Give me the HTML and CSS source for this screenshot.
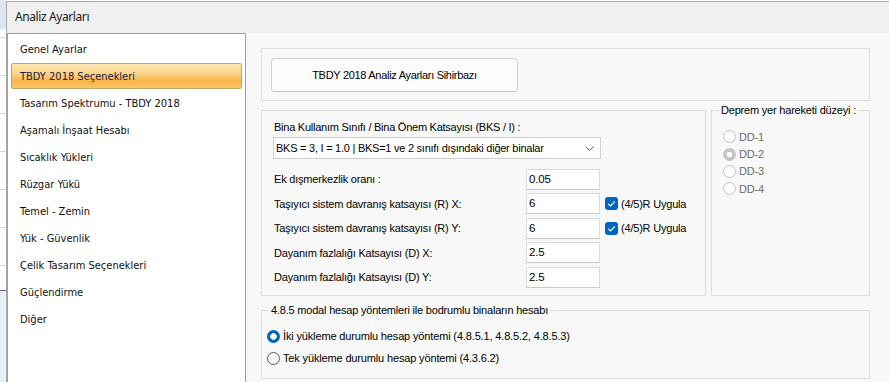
FILE: index.html
```html
<!DOCTYPE html>
<html lang="tr">
<head>
  <meta charset="UTF-8" />
  <meta name="viewport" content="width=device-width, initial-scale=1.0"/>
  <title>Analiz Ayarları</title>
  <link rel="stylesheet" href="styles.css">
</head>
<body>
  <div class="screen">
    <div class="backapp"></div>

    <div class="dialog">
      <div class="titlebar">Analiz Ayarları</div>

      <div class="dialog-body">
        <ul class="nav">
          <li>Genel Ayarlar</li>
          <li class="selected">TBDY 2018 Seçenekleri</li>
          <li>Tasarım Spektrumu - TBDY 2018</li>
          <li>Aşamalı İnşaat Hesabı</li>
          <li>Sıcaklık Yükleri</li>
          <li>Rüzgar Yükü</li>
          <li>Temel - Zemin</li>
          <li>Yük - Güvenlik</li>
          <li>Çelik Tasarım Seçenekleri</li>
          <li>Güçlendirme</li>
          <li>Diğer</li>
        </ul>

        <div class="pane">
          <div class="group wizard">
            <button class="wizard-btn">TBDY 2018 Analiz Ayarları Sihirbazı</button>
          </div>

          <div class="group-row">
            <div class="group params">
              <div class="field-label">Bina Kullanım Sınıfı / Bina Önem Katsayısı (BKS / I) :</div>
              <div class="select">
                <span>BKS = 3, I = 1.0 | BKS=1 ve 2 sınıfı dışındaki diğer binalar</span>
                <svg class="chevron" width="9" height="5" viewBox="0 0 9 5"><path d="M0.5 0.5 L4.5 4.5 L8.5 0.5" fill="none" stroke="#606060" stroke-width="1"/></svg>
              </div>

              <div class="rows">
                <div class="row">
                  <span class="row-label">Ek dışmerkezlik oranı :</span>
                  <span class="input">0.05</span>
                </div>
                <div class="row">
                  <span class="row-label">Taşıyıcı sistem davranış katsayısı (R) X:</span>
                  <span class="input">6</span>
                  <span class="check">
                    <svg width="13" height="13" viewBox="0 0 13 13"><rect width="13" height="13" rx="3" fill="#0067c0"/><path d="M3.3 6.8 L5.5 9 L9.8 4.4" fill="none" stroke="#fff" stroke-width="1.2"/></svg>
                    (4/5)R Uygula
                  </span>
                </div>
                <div class="row">
                  <span class="row-label">Taşıyıcı sistem davranış katsayısı (R) Y:</span>
                  <span class="input">6</span>
                  <span class="check">
                    <svg width="13" height="13" viewBox="0 0 13 13"><rect width="13" height="13" rx="3" fill="#0067c0"/><path d="M3.3 6.8 L5.5 9 L9.8 4.4" fill="none" stroke="#fff" stroke-width="1.2"/></svg>
                    (4/5)R Uygula
                  </span>
                </div>
                <div class="row">
                  <span class="row-label">Dayanım fazlalığı Katsayısı (D) X:</span>
                  <span class="input">2.5</span>
                </div>
                <div class="row">
                  <span class="row-label">Dayanım fazlalığı Katsayısı (D) Y:</span>
                  <span class="input">2.5</span>
                </div>
              </div>
            </div>

            <div class="group levels">
              <span class="legend">Deprem yer hareketi düzeyi :</span>
              <div class="radio disabled"><span class="dot"></span>DD-1</div>
              <div class="radio disabled on"><span class="dot"></span>DD-2</div>
              <div class="radio disabled"><span class="dot"></span>DD-3</div>
              <div class="radio disabled"><span class="dot"></span>DD-4</div>
            </div>
          </div>

          <div class="group modal">
            <span class="legend">4.8.5 modal hesap yöntemleri ile bodrumlu binaların hesabı</span>
            <div class="radio on"><span class="dot"></span>İki yükleme durumlu hesap yöntemi (4.8.5.1, 4.8.5.2, 4.8.5.3)</div>
            <div class="radio"><span class="dot"></span>Tek yükleme durumlu hesap yöntemi (4.3.6.2)</div>
          </div>
        </div>
      </div>
    </div>
  </div>
</body>
</html>
```

FILE: styles.css
```css
body {
  margin: 0;
  font-family: "Liberation Sans", Arial, sans-serif;
  font-size: 11px;
  color: #000;
  background: #fff;
}

.screen {
  display: flex;
  width: 889px;
  height: 382px;
  overflow: hidden;
}

/* sliver of the app behind the dialog */
.backapp {
  width: 6px;
  flex: none;
  background:
    linear-gradient(#dbe6f2 0 29px, transparent 29px),
    linear-gradient(transparent 290px, #6a5a8a 290px 291px, #e8eff4 291px),
    repeating-linear-gradient(#fff 0 37px, #d6d6d6 37px 38px);
}

.dialog {
  flex: 1;
  display: flex;
  flex-direction: column;
  margin-top: 1px;
  border-top: 1px solid #a4a8ae;
  border-left: 1px solid #a9a9a9;
  background: #f8f8f8;
}

.titlebar {
  height: 31px;
  flex: none;
  padding-left: 8px;
  line-height: 30px;
  background: #f0f0f0;
  font-family: "Noto Sans", "Liberation Sans", sans-serif;
  font-size: 12px;
  letter-spacing: -0.4px;
  color: #1a1a1a;
}

.dialog-body {
  flex: 1;
  display: flex;
}

.nav {
  width: 237px;
  flex: none;
  margin: 0;
  padding: 2px 0 0;
  list-style: none;
  background: #fff;
  border: 1px solid #a0a0a0;
  border-bottom: none;
  font-family: "DejaVu Sans Condensed", "Liberation Sans", sans-serif;
  font-size: 11px;
  color: #111;
}

.nav li {
  height: 26px;
  line-height: 26px;
  margin: 0 3px 1px;
  padding-left: 8px;
  border: 1px solid transparent;
  box-sizing: border-box;
}

.nav li.selected {
  border-color: #c6a466;
  border-radius: 2px;
  color: #1a1a3c;
  background: linear-gradient(#fde7b4 0%, #fcd38a 40%, #f9b446 72%, #fbc86c 100%);
}

.pane {
  flex: 1;
  padding: 15px 19px 0 15px;
  letter-spacing: -0.2px;
}

.group {
  position: relative;
  border: 1px solid #dcdcdc;
  box-sizing: border-box;
}

.legend {
  position: absolute;
  top: -8px;
  left: 7px;
  padding: 0 2px;
  line-height: 14px;
  background: #f8f8f8;
  white-space: nowrap;
}

.wizard {
  height: 53px;
  padding: 9px;
}

.wizard-btn {
  width: 247px;
  height: 34px;
  background: #fdfdfd;
  border: 1px solid #d0d0d0;
  border-bottom-color: #c4c4c4;
  border-radius: 4px;
  font-family: inherit;
  font-size: 11px;
  letter-spacing: -0.3px;
  color: #000;
}

.group-row {
  display: flex;
  gap: 5px;
  margin-top: 9px;
}

.params {
  width: 445px;
  height: 186px;
  padding: 9px 0 0 11px;
}

.field-label {
  line-height: 14px;
  padding-left: 1px;
  letter-spacing: -0.25px;
}

.select {
  display: flex;
  align-items: center;
  justify-content: space-between;
  width: 328px;
  height: 22px;
  margin-top: 3px;
  padding: 0 6px 0 2px;
  box-sizing: border-box;
  background: #fff;
  border: 1px solid #cfcfcf;
  letter-spacing: -0.25px;
}

.rows {
  display: flex;
  flex-direction: column;
  gap: 4.5px;
  margin-top: 10px;
}

.row {
  display: flex;
  align-items: center;
  height: 20px;
}

.row-label {
  width: 252px;
  padding-left: 1px;
}

.input {
  width: 74px;
  height: 21px;
  line-height: 19px;
  padding-left: 2px;
  box-sizing: border-box;
  background: #fff;
  border: 1px solid #dadada;
  border-bottom-color: #c8c8c8;
  font-size: 11.5px;
}

.check {
  display: flex;
  align-items: center;
  gap: 3px;
  margin-left: 5px;
}

.levels {
  width: 159px;
  height: 186px;
  padding: 17px 0 0 11px;
}

.radio {
  display: flex;
  align-items: center;
  gap: 3px;
  height: 17.4px;
}

.dot {
  width: 11px;
  height: 11px;
  flex: none;
  border: 1px solid #5c5c5c;
  border-radius: 50%;
  background: #f6f6f6;
}

.radio.on .dot {
  width: 13px;
  height: 13px;
  border: none;
  box-sizing: border-box;
  background: radial-gradient(circle, #fff 0 3px, #0067c0 3.5px);
}

.radio.disabled {
  color: #6d6d6d;
}

.radio.disabled .dot {
  border-color: #c6c6c6;
  background: #fbfbfb;
}

.radio.disabled.on .dot {
  background: radial-gradient(circle, #fff 0 2.5px, #c6c6c6 3px);
}

.modal {
  height: 69px;
  margin-top: 14px;
  padding: 14px 0 0 5px;
}

.modal .radio {
  height: 22px;
  letter-spacing: -0.15px;
}
```
